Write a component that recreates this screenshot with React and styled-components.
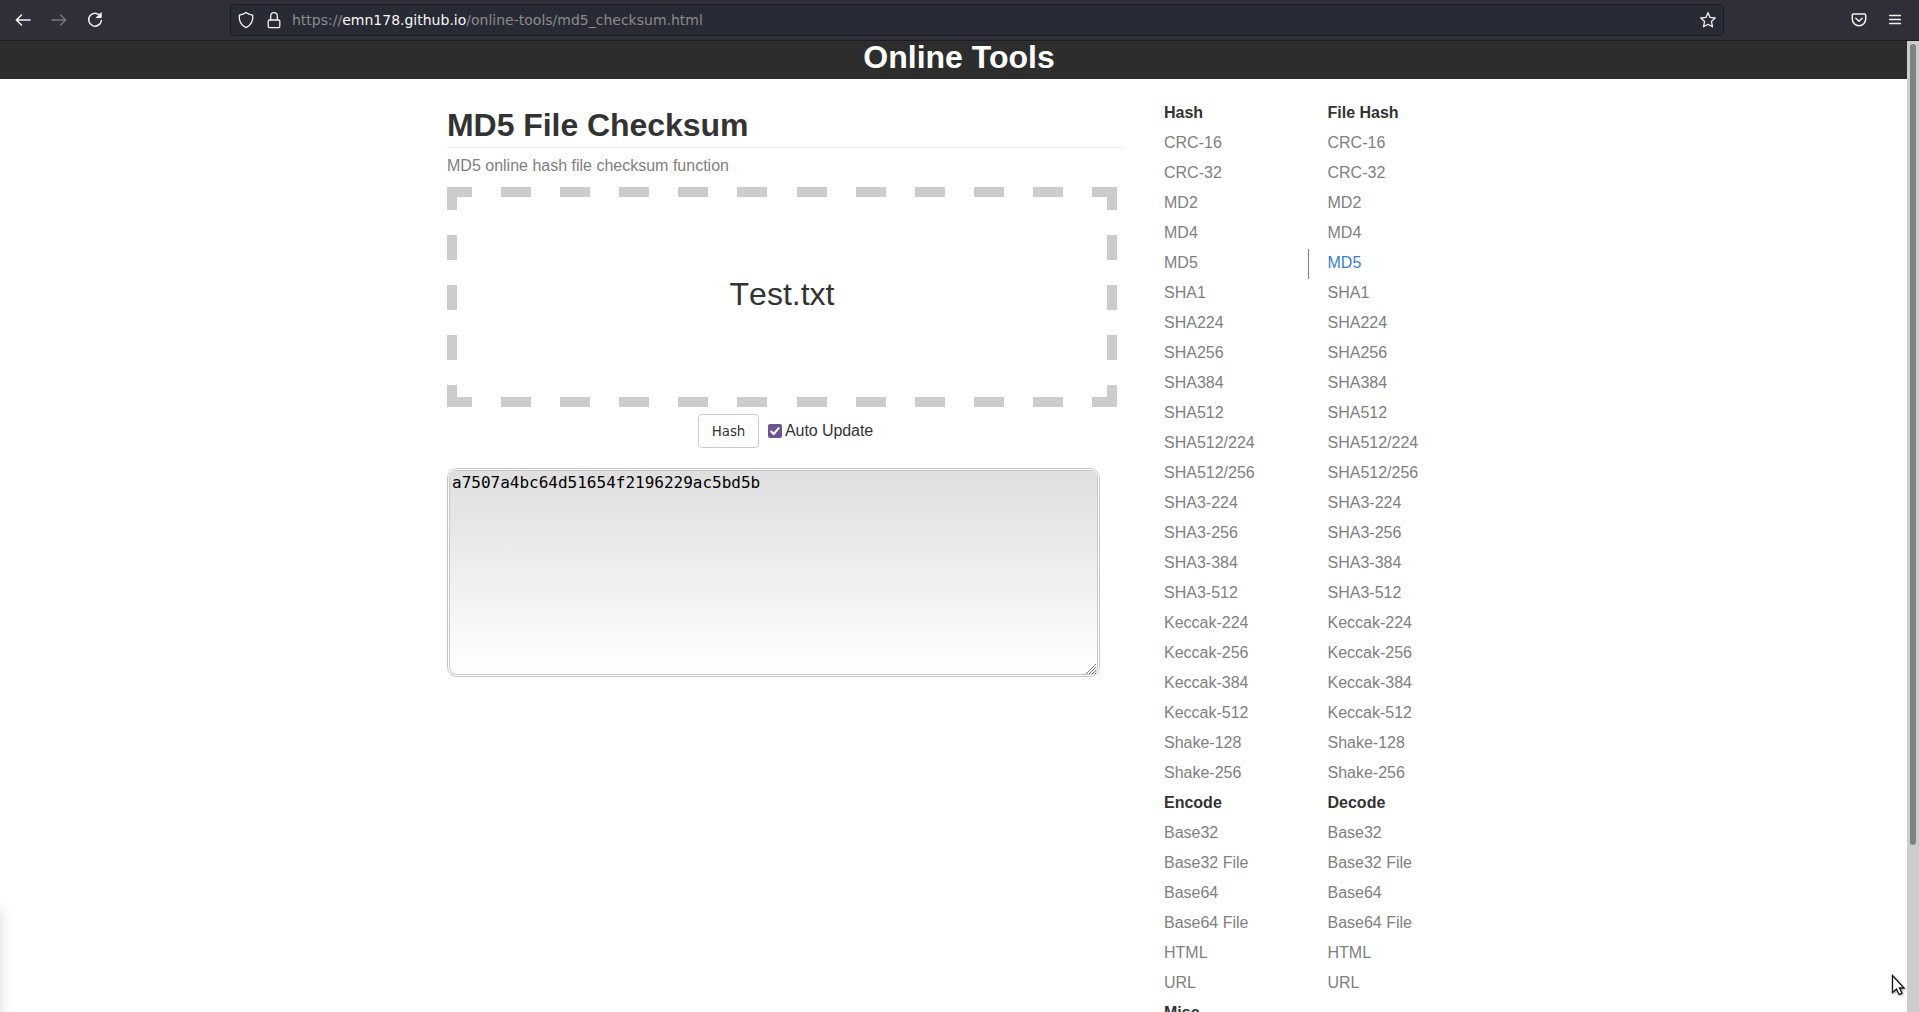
import React from "react";
import styled, { createGlobalStyle } from "styled-components";

const Global = createGlobalStyle`
  * { box-sizing: border-box; }
  html, body { margin: 0; height: 100%; overflow: hidden; background: #fff; }
  body { font: 16px/24px "Liberation Sans", Arial, sans-serif; color: #333; }
`;
const Window = styled.div`
  width: 100vw;
  height: 1012px;
  display: flex;
  flex-direction: column;
  overflow: hidden;
`;
const Toolbar = styled.div`
  flex: none;
  height: 41px;
  display: flex;
  align-items: center;
  padding: 0 13px 1px 12px;
  background: #302f39;
  border-bottom: 1px solid #1c1b26;
`;
const NavButtons = styled.div`
  display: flex;
  gap: 14px;
  width: 218px;
`;
const Icon = styled.svg`
  display: block;
  flex: none;
  width: ${(p) => p.$size || 22}px;
  height: ${(p) => p.$size || 22}px;
  margin-left: ${(p) => p.$gap || 0}px;
  fill: none;
  stroke: ${(p) => p.$color || "#f3f3f0"};
  stroke-width: ${(p) => p.$weight || 1.5};
  stroke-linecap: round;
  stroke-linejoin: round;
`;
const AddressBar = styled.div`
  width: 1494px;
  height: 32px;
  display: flex;
  align-items: center;
  padding: 0 6px 0 6px;
  background: #282a36;
  border: 1px solid #1b1b28;
  border-radius: 4px;
`;
const Url = styled.div`
  flex: 1;
  margin-left: 9px;
  font: 14px/20px "DejaVu Sans", sans-serif;
  color: #8b8b8f;
  white-space: nowrap;
`;
const Host = styled.span`color: #f8f8f2;`;
const MenuButtons = styled.div`
  display: flex;
  gap: 14px;
  margin-left: auto;
`;
const Viewport = styled.div`
  flex: 1;
  min-height: 0;
  display: flex;
`;
const Page = styled.div`
  flex: 1;
  display: flex;
  flex-direction: column;
  overflow: hidden;
  position: relative;
`;
const SiteHeader = styled.header`
  flex: none;
  height: 38px;
  background: #2d2d2d;
  color: #fff;
  text-align: center;
  font-size: 32px;
  font-weight: bold;
  line-height: 32px;
  padding-left: 11px;
`;
const Columns = styled.div`
  display: flex;
  padding-left: 447px;
`;
const Main = styled.main`
  width: 677px;
  padding-top: 20px;
`;
const Heading = styled.h1`
  margin: 0;
  height: 49px;
  padding-top: 8px;
  font-size: 32px;
  line-height: 36px;
  letter-spacing: -0.05px;
  border-bottom: 1px solid #eee;
`;
const Subtitle = styled.p`
  margin: 0;
  padding-top: 6px;
  height: 39px;
  color: #808080;
`;
const DropZone = styled.div`
  --h: repeating-linear-gradient(to right, #ccc 0 24.9px, transparent 24.9px 54px, #ccc 54px 59.1px);
  --v: repeating-linear-gradient(to bottom, #ccc 0 23px, transparent 23px 48px, #ccc 48px 50px);
  width: 670px;
  height: 220px;
  display: flex;
  align-items: center;
  justify-content: center;
  padding-bottom: 6px;
  font-size: 32px;
  font-kerning: none;
  background:
    var(--h) top / 100% 10px no-repeat,
    var(--h) bottom / 100% 10px no-repeat,
    var(--v) left / 10px 100% no-repeat,
    var(--v) right / 10px 100% no-repeat;
`;
const Actions = styled.div`
  display: flex;
  align-items: center;
  padding: 7px 0 0 251px;
  letter-spacing: -0.08px;
`;
const HashButton = styled.button`
  width: 61px;
  height: 34px;
  padding: 0;
  margin: 0 9px 0 0;
  border: 1px solid #ccc;
  border-radius: 4px;
  background: #fff;
  color: #333;
  font: 13.333px "DejaVu Sans", sans-serif;
`;
const Checkbox = styled.span`
  width: 14px;
  height: 14px;
  margin-right: 3px;
  border-radius: 2px;
  background: #6c5491;
`;
const Output = styled.div`
  width: 653px;
  height: 209px;
  margin-top: 20px;
  padding: 2px;
  display: flex;
  flex-direction: column;
  justify-content: space-between;
  border: 3px double #c8c8c8;
  border-radius: 10px;
  background: linear-gradient(#dfdfdf, #fff) padding-box, #fff;
  color: #000;
  font: 16px/19px "DejaVu Sans Mono", monospace;
`;
const Grip = styled(Icon)`
  align-self: flex-end;
  margin: 0 -1px -2px 0;
`;
const Menu = styled.nav`
  display: flex;
  padding: 20px 0 0 25px;
`;
const MenuColumn = styled.div`
  width: ${(p) => p.$width}px;
  display: flex;
  flex-direction: column;
  font-kerning: none;
`;
const MenuItem = styled.a`
  height: 30px;
  padding-left: ${(p) => p.$indent}px;
  border-left: 1px solid ${(p) => (p.$active ? "#808080" : "transparent")};
  color: ${(p) => (p.$title ? "#333" : p.$active ? "#3a80c9" : "#808080")};
  font-weight: ${(p) => (p.$title ? "bold" : "normal")};
  line-height: 28px;
  white-space: nowrap;
`;
const EdgeShadow = styled.div`
  position: absolute;
  left: -20px;
  bottom: -20px;
  width: 20px;
  height: 122px;
  box-shadow: 0 0 14px rgba(0, 0, 0, 0.16);
`;
const Scrollbar = styled.div`
  width: 12px;
  padding: 3px 3px 0;
  background: #cdcdcd;
`;
const Thumb = styled.div`
  height: 801px;
  border-radius: 3px;
  background: #7f8283;
`;
const Pointer = styled.svg`
  position: absolute;
  left: 1890px;
  top: 933px;
  width: 17px;
  height: 24px;
  filter: drop-shadow(1px 1px 1px rgba(0, 0, 0, 0.35));
`;

const hashes = ["CRC-16", "CRC-32", "MD2", "MD4", "MD5", "SHA1", "SHA224", "SHA256", "SHA384", "SHA512", "SHA512/224", "SHA512/256", "SHA3-224", "SHA3-256", "SHA3-384", "SHA3-512", "Keccak-224", "Keccak-256", "Keccak-384", "Keccak-512", "Shake-128", "Shake-256"];
const codecs = ["Base32", "Base32 File", "Base64", "Base64 File", "HTML", "URL"];

function List({ sections, active, width, indent }) {
  return (
    <MenuColumn $width={width}>
      {sections.map(([title, items]) => (
        <React.Fragment key={title}>
          <MenuItem as="div" $title $indent={indent}>{title}</MenuItem>
          {items.map((name) => (
            <MenuItem key={name} $indent={indent} $active={name === active}>{name}</MenuItem>
          ))}
        </React.Fragment>
      ))}
    </MenuColumn>
  );
}

export default function App() {
  return (
    <Window>
      <Global />
      <Toolbar>
        <NavButtons>
          <Icon viewBox="0 0 22 22"><path d="M18 11H4.5M9.5 6l-5.2 5 5.2 5" /></Icon>
          <Icon viewBox="0 0 22 22" $color="#77767c"><path d="M4 11h13.5M12.5 6l5.2 5-5.2 5" /></Icon>
          <Icon viewBox="0 0 22 22"><path d="M16.4 7.2A6.4 6.4 0 1 0 17.4 11.5" /><path d="M17.2 4v4.6h-4.6z" fill="#f3f3f0" strokeWidth="1" /></Icon>
        </NavButtons>
        <AddressBar>
          <Icon $size={18} viewBox="0 0 18 18" $weight={1.3}><path d="M9 1.6C7.300 3 5 3.700 2.300 4.100 1.700 9.500 4.300 14.300 9 16.700c4.700-2.400 7.300-7.200 6.700-12.600C13 3.700 10.700 3 9 1.600z" /></Icon>
          <Icon $size={18} viewBox="0 0 18 18" $weight={1.3} $gap={10}><rect x="3.200" y="9" width="11.600" height="7.600" rx="1.300" /><path d="M5.700 8.800V5a3.300 3.300 0 0 1 6.600 0v3.800" /></Icon>
          <Url>https://<Host>emn178.github.io</Host>/online-tools/md5_checksum.html</Url>
          <Icon $size={18} viewBox="0 0 18 18" $weight={1.3}><path d="m9 1.700 2.100 4.700 5.100.6-3.800 3.400 1.100 5.400L9 13.300l-4.500 2.500 1.100-5.400L1.800 7l5.100-.6z" /></Icon>
        </AddressBar>
        <MenuButtons>
          <Icon viewBox="0 0 22 22"><path d="M5.500 5h11a1.200 1.200 0 0 1 1.200 1.200V10a6.700 6.700 0 0 1-13.400 0V6.200A1.200 1.200 0 0 1 5.500 5zM7.800 9.200l3.200 3 3.200-3" /></Icon>
          <Icon viewBox="0 0 22 22" $weight={1.3}><path d="M5.500 6.500h11M5.500 10.500h11M5.500 14.500h11" /></Icon>
        </MenuButtons>
      </Toolbar>
      <Viewport>
        <Page>
          <SiteHeader>Online Tools</SiteHeader>
          <Columns>
            <Main>
              <Heading>MD5 File Checksum</Heading>
              <Subtitle>MD5 online hash file checksum function</Subtitle>
              <DropZone>Test.txt</DropZone>
              <Actions>
                <HashButton>Hash</HashButton>
                <Checkbox>
                  <Icon $size={14} viewBox="0 0 14 14" $color="#fff" $weight={2}><path d="m3.200 7.500 2.500 2.500 5-5.800" /></Icon>
                </Checkbox>
                Auto Update
              </Actions>
              <Output>
                <span>a7507a4bc64d51654f2196229ac5bd5b</span>
                <Grip $size={10} viewBox="0 0 10 10" $color="#777" $weight={1}><path d="M0 10 10 0M3 10l7-7M6 10l4-4M9 10l1-1" /></Grip>
              </Output>
            </Main>
            <Menu>
              <List width={159} indent={14} sections={[["Hash", hashes], ["Encode", codecs], ["Misc", []]]} />
              <List width={180} indent={18.5} active="MD5" sections={[["File Hash", hashes], ["Decode", codecs]]} />
            </Menu>
          </Columns>
          <EdgeShadow />
          <Pointer viewBox="0 0 17 24">
            <path d="M2.500 1.500v17l4-3.500 2.500 5.500 3-1.300-2.500-5.200h4.500z" fill="#fff" stroke="#111" strokeWidth="1.300" />
          </Pointer>
        </Page>
        <Scrollbar><Thumb /></Scrollbar>
      </Viewport>
    </Window>
  );
}
